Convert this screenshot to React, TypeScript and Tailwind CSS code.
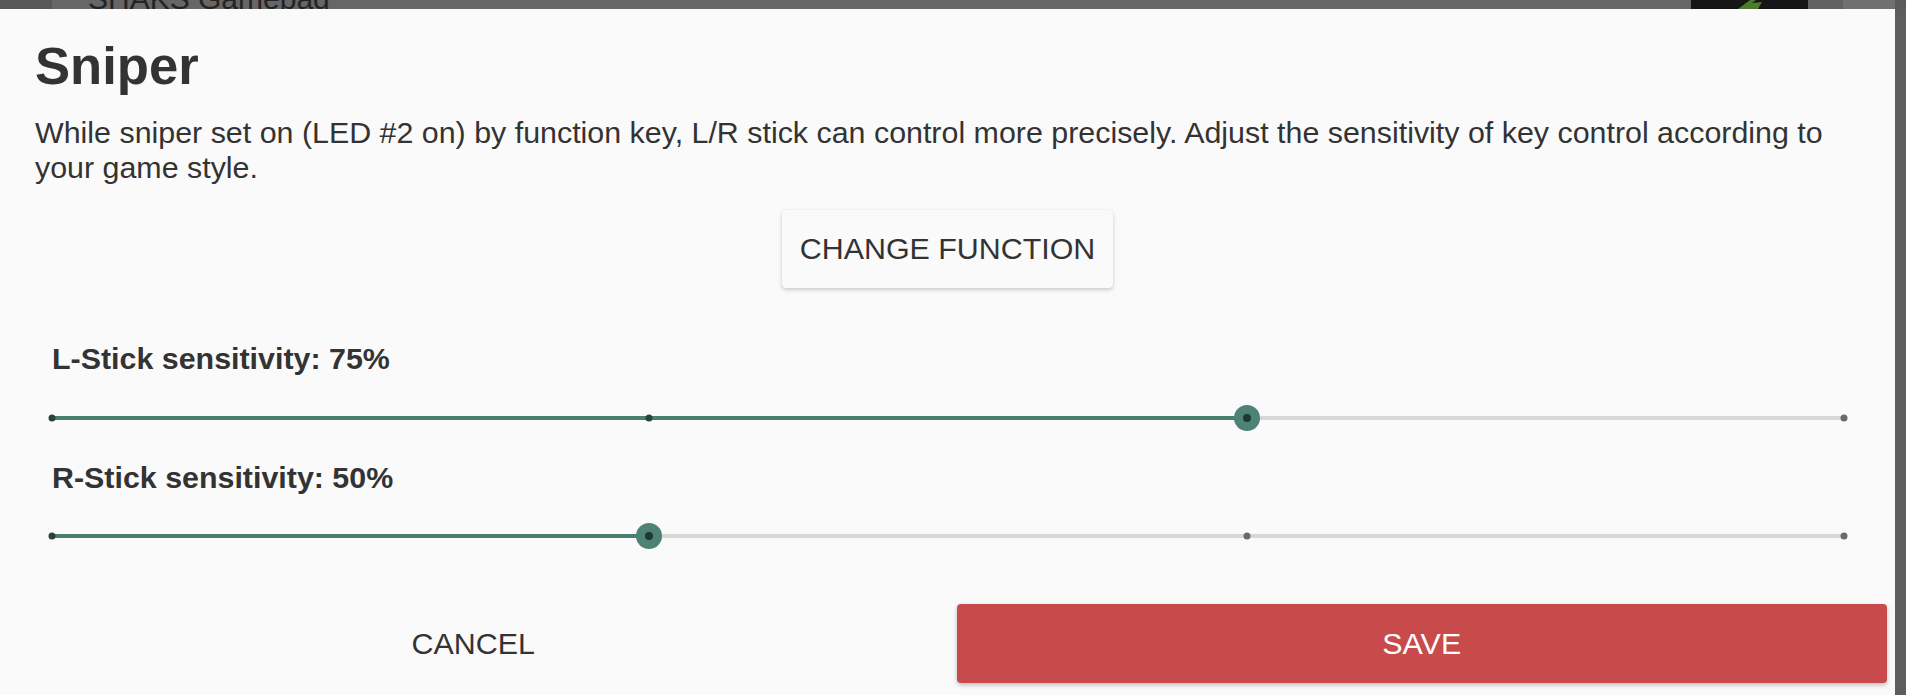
import React from 'react';

const font = { fontFamily: '"Liberation Sans", Arial, sans-serif' };

const MARKS = [25, 50, 75, 100];

function StickSlider({ value }: { value: number }) {
  const pos = (v: number) => ((v - 25) / 75) * 100;
  const pct = pos(value);

  return (
    <div className="relative h-7">
      <div className="absolute left-0 right-0 top-1/2 h-[4px] -translate-y-1/2 bg-[#d7d7d7]" />
      <div
        className="absolute left-0 top-1/2 h-[4px] -translate-y-1/2 bg-[#4a7e71]"
        style={{ width: `${pct}%` }}
      />
      {MARKS.map((m) => (
        <div
          key={m}
          className={`absolute top-1/2 w-[7px] h-[7px] -translate-x-1/2 -translate-y-1/2 rounded-full ${
            m <= value ? 'bg-[#27433c]' : 'bg-[#6a6a6a]'
          }`}
          style={{ left: `${pos(m)}%` }}
        />
      ))}
      <div
        className="absolute top-1/2 w-[26px] h-[26px] -translate-x-1/2 -translate-y-1/2 rounded-full bg-[#4d8275] flex items-center justify-center"
        style={{ left: `${pct}%` }}
      >
        <div className="w-[8px] h-[8px] rounded-full bg-[#1d3932]" />
      </div>
    </div>
  );
}

export default function App() {
  return (
    <div className="w-[1906px] h-[695px] bg-[#666666] flex flex-col overflow-hidden" style={font}>
      {/* backdrop peeking above the dialog */}
      <div className="h-[9px] flex overflow-hidden shrink-0">
        <div className="w-[52px] bg-[#575757]" />
        <div className="pl-[36px] flex-1">
          <div className="mt-[-16px] text-[30px] leading-[30px] text-[#242424]">SHAKS Gamepad</div>
        </div>
        <div className="w-[117px] bg-[#161616] flex justify-center">
          <svg width="40" height="9" viewBox="0 0 40 9">
            <path d="M8 9 L20 0 L26 0 L22 3 L32 2 L28 9 Z" fill="#4c7a2e" />
          </svg>
        </div>
        <div className="w-[35px] bg-[#626262]" />
        <div className="w-[52px] bg-[#707070]" />
        <div className="w-[11px] bg-[#5a5a5a]" />
      </div>

      <div className="flex flex-1">
        <div className="w-[1895px] bg-[#fafafa] text-[#333333] flex flex-col pt-[27px]">
          <div className="px-[35px]">
            <h1 className="text-[52.6px] leading-[60px] font-bold">Sniper</h1>
            <p className="mt-[19px] text-[30.4px] leading-[35px]">
              While sniper set on (LED #2 on) by function key, L/R stick can control more precisely. Adjust the
              sensitivity of key control according to your game style.
            </p>
          </div>

          <div className="flex justify-center mt-[25px]">
            <button className="w-[331px] h-[78px] rounded-[4px] bg-[#fafafa] text-[30.4px] text-[#333333] uppercase shadow-[0_2px_4px_rgba(0,0,0,0.18),0_0_1px_rgba(0,0,0,0.12)]">
              Change Function
            </button>
          </div>

          <div className="pl-[52px] pr-[51px] mt-[53px]">
            <div className="text-[30.4px] leading-[35px] font-bold">L-Stick sensitivity: 75%</div>
            <div className="mt-[28px]">
              <StickSlider value={75} />
            </div>
            <div className="mt-[28px] text-[30.4px] leading-[35px] font-bold">R-Stick sensitivity: 50%</div>
            <div className="mt-[27px]">
              <StickSlider value={50} />
            </div>
          </div>

          <div className="flex gap-[18px] pl-[8px] pr-[8px] mt-[54px]">
            <button className="flex-1 h-[79px] text-[30.4px] text-[#333333] uppercase">Cancel</button>
            <button className="flex-1 h-[79px] rounded-[4px] bg-[#c94a4a] text-[30.4px] text-white uppercase shadow-[0_2px_4px_rgba(0,0,0,0.25)]">
              Save
            </button>
          </div>
        </div>
        <div className="flex-1 bg-[#5d5d5d]" />
      </div>
    </div>
  );
}
